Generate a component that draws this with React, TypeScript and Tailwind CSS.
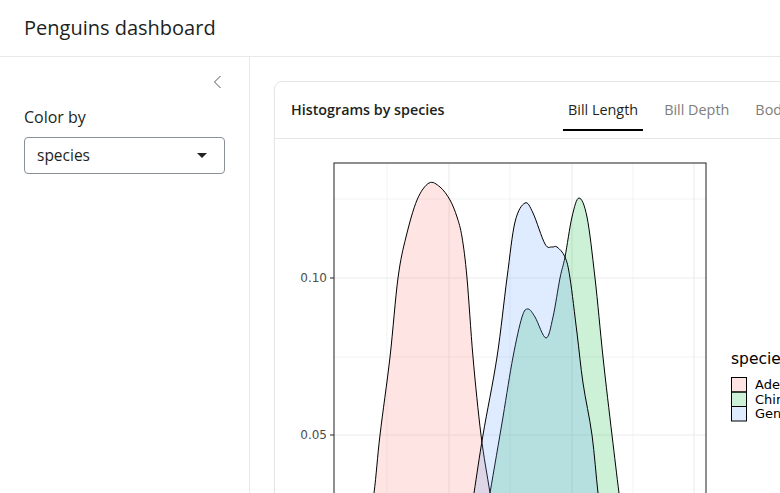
import React from "react";

type Pt = [number, number];

// catmull-rom through the points -> cubic bezier path
function smooth(pts: Pt[], close = true) {
  let d = `M${pts[0][0]},${pts[0][1]}`;
  for (let i = 0; i < pts.length - 1; i++) {
    const p0 = pts[i - 1] || pts[i];
    const p1 = pts[i];
    const p2 = pts[i + 1];
    const p3 = pts[i + 2] || p2;
    const c1x = p1[0] + (p2[0] - p0[0]) / 6;
    const c1y = p1[1] + (p2[1] - p0[1]) / 6;
    const c2x = p2[0] - (p3[0] - p1[0]) / 6;
    const c2y = p2[1] - (p3[1] - p1[1]) / 6;
    d += ` C${c1x.toFixed(1)},${c1y.toFixed(1)} ${c2x.toFixed(1)},${c2y.toFixed(1)} ${p2[0]},${p2[1]}`;
  }
  return close ? d + " Z" : d;
}

const adelie: Pt[] = [
  [366, 540], [374, 493], [380, 435], [390, 357], [398, 278], [406, 237],
  [417, 200], [429, 183], [440, 187], [450, 200], [457, 217], [462, 237],
  [467, 278], [473, 357], [481, 435], [490, 493], [497, 540],
];
const chinstrap: Pt[] = [
  [482, 540], [490, 493], [503, 417], [513, 357], [522, 317], [528, 309],
  [535, 317], [546, 338], [553, 317], [560, 278], [565, 257], [572, 217],
  [579, 198], [587, 217], [595, 278], [603, 357], [612, 435], [619, 493], [625, 540],
];
const gentoo: Pt[] = [
  [467, 540], [474, 493], [483, 435], [497, 357], [507, 278], [515, 222],
  [525, 203], [533, 213], [545, 244], [552, 247], [557, 247], [565, 257],
  [570, 278], [577, 333], [583, 383], [592, 435], [598, 493], [604, 540],
];

const series = [
  { name: "Adelie", pts: adelie, fill: "#F8766D" },
  { name: "Chinstrap", pts: chinstrap, fill: "#00BA38" },
  { name: "Gentoo", pts: gentoo, fill: "#619CFF" },
];

function Plot() {
  const px0 = 334;
  const px1 = 706;
  const py0 = 163;
  const majorX = [449, 572, 694];
  const minorX = [387, 510, 633];
  const majorY = [278, 435];
  const minorY = [199, 357];
  return (
    <svg width="600" height="360" className="block" style={{ fontFamily: "'DejaVu Sans', sans-serif" }}>
      <defs>
        <clipPath id="panel">
          <rect x={px0} y={py0} width={px1 - px0} height={400} />
        </clipPath>
      </defs>
      <g transform="translate(-275,-139)">
        <g clipPath="url(#panel)">
          <rect x={px0} y={py0} width={px1 - px0} height={400} fill="#fff" />
          {minorX.map((x) => (
            <line key={x} x1={x} x2={x} y1={py0} y2={600} stroke="#ebebeb" strokeWidth="0.6" />
          ))}
          {minorY.map((y) => (
            <line key={y} x1={px0} x2={px1} y1={y} y2={y} stroke="#ebebeb" strokeWidth="0.6" />
          ))}
          {majorX.map((x) => (
            <line key={x} x1={x} x2={x} y1={py0} y2={600} stroke="#ebebeb" strokeWidth="1.1" />
          ))}
          {majorY.map((y) => (
            <line key={y} x1={px0} x2={px1} y1={y} y2={y} stroke="#ebebeb" strokeWidth="1.1" />
          ))}
          {series.map((s) => (
            <path key={s.name} d={smooth(s.pts)} fill={s.fill} fillOpacity="0.2" stroke="#000" strokeWidth="1" />
          ))}
        </g>
        <rect x={px0} y={py0} width={px1 - px0} height={400} fill="none" stroke="#333" strokeWidth="1.1" />
        {[
          { y: 278, t: "0.10" },
          { y: 435, t: "0.05" },
        ].map((tk) => (
          <g key={tk.t}>
            <line x1={330} x2={px0} y1={tk.y} y2={tk.y} stroke="#333" strokeWidth="1.1" />
            <text x={327} y={tk.y + 4} textAnchor="end" fontSize="12" fill="#4d4d4d">
              {tk.t}
            </text>
          </g>
        ))}
        <text x={731} y={364} fontSize="15.5" fill="#000">
          species
        </text>
        {series.map((s, i) => (
          <g key={s.name}>
            <rect x={731.5} y={377.5 + i * 14.5} width={15} height={14.5} fill={s.fill} fillOpacity="0.2" stroke="#000" strokeWidth="1" />
            <text x={755} y={389 + i * 14.5} fontSize="13" fill="#000">
              {s.name}
            </text>
          </g>
        ))}
      </g>
    </svg>
  );
}

export default function App() {
  const tabs = ["Bill Length", "Bill Depth", "Body Mass"];
  return (
    <div className="w-[780px] h-[493px] overflow-hidden bg-white font-['Open_Sans',sans-serif] text-[#1d1f21]">
      <header className="h-[57px] border-b border-[#e9e9e9] flex items-center px-6">
        <h1 className="text-[20px] leading-none">Penguins dashboard</h1>
      </header>

      <div className="flex h-[436px]">
        <aside className="w-[250px] shrink-0 border-r border-[#e9e9e9] px-6">
          <div className="flex justify-end pt-[18px] pr-[3px]">
            <svg width="9" height="14" viewBox="0 0 9 14" className="text-[#555]">
              <polyline points="7.5,1 1.5,7 7.5,13" fill="none" stroke="currentColor" strokeWidth="1" />
            </svg>
          </div>
          <label className="block mt-[16px] text-[16px] leading-6 mb-2">Color by</label>
          <div className="h-[37px] w-[201px] border border-[#8a9099] rounded-[4px] flex items-center justify-between pl-[12px] pr-[17px]">
            <span className="text-[15.5px]">species</span>
            <svg width="10" height="5" viewBox="0 0 10 5">
              <polygon points="0,0 10,0 5,5" fill="#222" />
            </svg>
          </div>
        </aside>

        <main className="flex-1 p-6 overflow-hidden">
          <div className="w-[640px] h-[500px] shrink-0 border border-[#e6e6e6] rounded-[8px] shadow-[0_1px_2px_rgba(0,0,0,0.05)] overflow-hidden">
            <div className="h-[57px] border-b border-[#e6e6e6] flex items-center pl-4">
              <div className="text-[14.3px] font-semibold w-[272px] -mt-[1px]">Histograms by species</div>
              <div className="flex gap-4 items-end self-stretch pb-[7px]">
                {tabs.map((t, i) => (
                  <div
                    key={t}
                    className={
                      i === 0
                        ? "px-[5px] text-[14.4px] leading-5 font-medium text-[#1d1f21] pb-[9px] border-b-2 border-black"
                        : "px-[5px] text-[14.4px] leading-5 font-medium text-[#7d7d7d] pb-[9px] border-b-2 border-transparent"
                    }
                  >
                    {t}
                  </div>
                ))}
              </div>
            </div>
            <Plot />
          </div>
        </main>
      </div>
    </div>
  );
}
